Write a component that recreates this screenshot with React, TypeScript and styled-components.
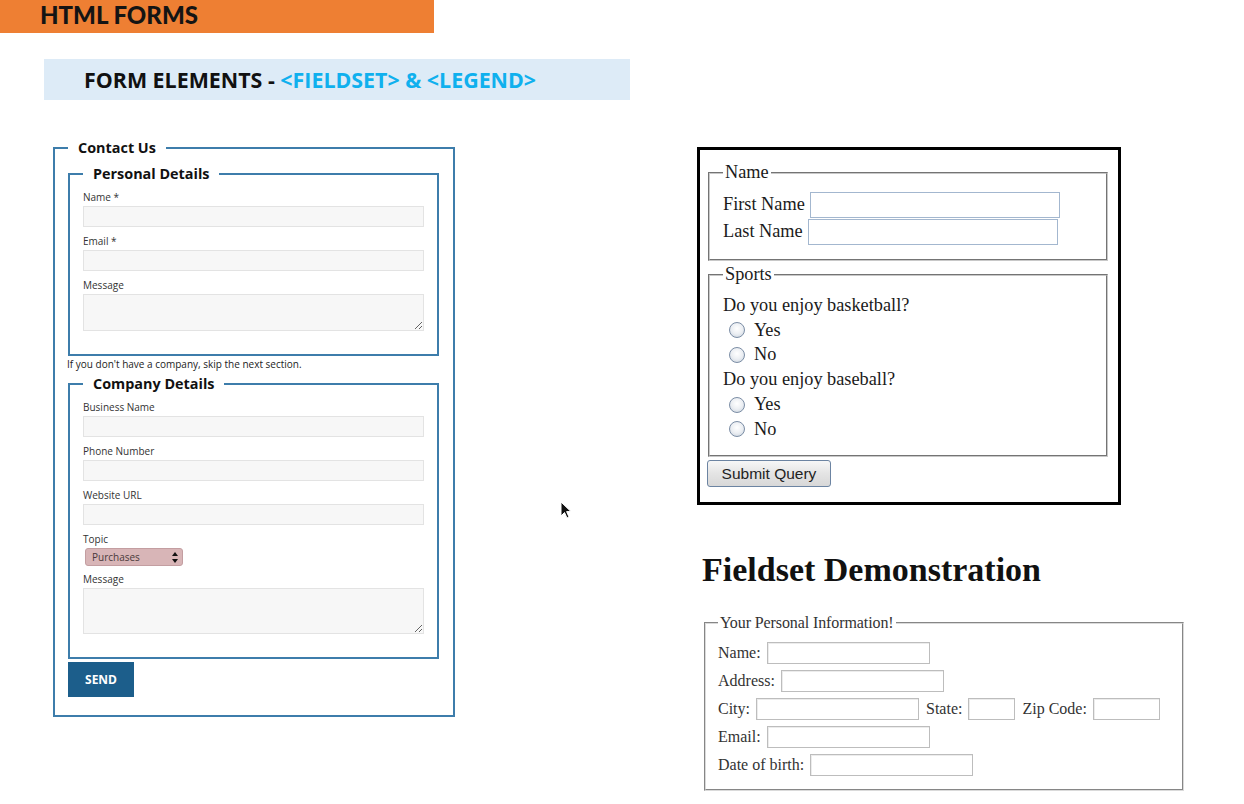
import React from "react";
import styled, { createGlobalStyle } from "styled-components";

const GlobalStyle = createGlobalStyle`
  html, body {
    margin: 0;
    padding: 0;
    width: 1244px;
    height: 804px;
    overflow: hidden;
    background: #ffffff;
  }
  body {
    font-family: "Open Sans", "Liberation Sans", sans-serif;
    color: #111;
  }
  * { box-sizing: border-box; }
`;

const Page = styled.div`
  position: relative;
  width: 1244px;
  height: 804px;
  display: flex;
  flex-direction: column;
`;

const TitleBar = styled.div`
  width: 434px;
  height: 33px;
  background: #ee7f33;
  padding: 0 0 0 40px;
  font: 900 24px/29px Lato, "Open Sans", sans-serif;
  color: #141414;
`;

const SubBar = styled.div`
  margin: 26px 0 0 44px;
  width: 586px;
  height: 41px;
  background: #ddebf7;
  padding-left: 40px;
  font: 700 21.4px/41px "Open Sans", sans-serif;
  color: #111;
`;

const Accent = styled.span`
  color: #0fb0ee;
`;

const Content = styled.div`
  display: flex;
  margin-top: 39px;
`;

const LeftColumn = styled.div`
  margin-left: 53px;
  width: 402px;
`;

const BlueFieldset = styled.fieldset<{ $outer?: boolean }>`
  margin: 0;
  min-width: 0;
  width: ${(p) => (p.$outer ? "402px" : "371px")};
  border: 2px solid #3d7dab;
  padding: ${(p) => (p.$outer ? "8px 13px 18px 13px" : "7px 13px 23px 13px")};
`;

const BlueLegend = styled.legend`
  padding: 0 10px;
  font: 700 14.4px/18px "Open Sans", sans-serif;
  color: #111;
`;

const Field = styled.div<{ $gap?: number }>`
  display: flex;
  flex-direction: column;
  gap: 2px;
  margin-bottom: ${(p) => (p.$gap ?? 7)}px;
  &:last-child { margin-bottom: 0; }
`;

const SmallLabel = styled.label`
  font: 400 10px/14px "Open Sans", sans-serif;
  color: #333;
`;

const FlatInput = styled.input`
  display: block;
  width: 100%;
  height: 21px;
  margin: 0;
  border: 1px solid #e3e3e3;
  background: #f7f7f7;
  outline: none;
`;

const FlatArea = styled.textarea<{ $h: number }>`
  display: block;
  width: 100%;
  height: ${(p) => p.$h}px;
  margin: 0;
  border: 1px solid #e3e3e3;
  background: #f7f7f7;
  resize: vertical;
  outline: none;
`;

const SelectBox = styled.div`
  margin-left: 2px;
  width: 98px;
  height: 18px;
  border: 1px solid #c39ea1;
  border-radius: 3px;
  background: #d8b5b7;
  display: flex;
  align-items: center;
  justify-content: space-between;
  padding: 0 4px 0 6px;
  font: 400 10px/16px "Open Sans", sans-serif;
  color: #4a3a3b;
`;

const Helper = styled.p`
  margin: 1px 0 4px -1px;
  font: 400 10px/14px "Open Sans", sans-serif;
  color: #222;
`;

const SendButton = styled.button`
  display: block;
  margin-top: 3px;
  width: 66px;
  height: 35px;
  border: none;
  background: #1c5e8b;
  color: #fff;
  font: 700 12px/35px "Open Sans", sans-serif;
  padding: 0;
`;

const RightColumn = styled.div`
  margin-left: 242px;
  margin-top: 8px;
  display: flex;
  flex-direction: column;
`;

const DemoBox = styled.div`
  width: 424px;
  height: 358px;
  border: 3px solid #000;
  padding: 12px 10px 0 7px;
  font-family: "Liberation Serif", "Times New Roman", serif;
  color: #1a1a1a;
`;

const GreyFieldset = styled.fieldset<{ $top?: number; $pad: string }>`
  margin: ${(p) => p.$top ?? 0}px 0 0 1px;
  min-width: 0;
  border: 2px groove #c8c8c8;
  padding: ${(p) => p.$pad};
`;

const SerifLegend = styled.legend`
  padding: 0 2px;
  font-size: 18.3px;
  line-height: 21px;
`;

const SerifRow = styled.div`
  display: flex;
  align-items: center;
  gap: 5px;
  height: 27px;
  font-size: 18.3px;
`;

const BlueBorderInput = styled.input`
  width: 250px;
  height: 26px;
  margin: 0;
  border: 1px solid #a3b7cf;
  background: #fff;
  outline: none;
`;

const SerifLine = styled.div<{ $indent?: boolean }>`
  display: flex;
  align-items: center;
  height: 24.8px;
  font-size: 18.3px;
  padding-left: ${(p) => (p.$indent ? "6px" : "0")};
`;

const Radio = styled.span`
  width: 16px;
  height: 16px;
  border-radius: 50%;
  border: 1px solid #7b8da5;
  background: radial-gradient(circle at 50% 40%, #ffffff 0%, #eceff3 50%, #c6d0db 100%);
  margin-right: 9px;
  flex: none;
`;

const QueryButton = styled.button`
  margin: 3px 0 0 0;
  width: 124px;
  height: 27px;
  padding: 0;
  border: 1px solid #6c84a2;
  border-radius: 3px;
  background: linear-gradient(#f7f7f7, #e4e4e4 50%, #d8d8d8);
  font: 400 15.5px/25px "Liberation Sans", Arial, sans-serif;
  color: #222;
`;

const DemoHeading = styled.h1`
  margin: 46px 0 0 5px;
  font: 700 34px/38px "Liberation Serif", "Times New Roman", serif;
  color: #111;
`;

const InfoFieldset = styled.fieldset`
  margin: 25px 0 0 7px;
  width: 480px;
  min-width: 0;
  border: 2px groove #dadada;
  padding: 7px 12px 10px 12px;
  font-family: "Liberation Serif", "Times New Roman", serif;
  color: #333;
`;

const InfoLegend = styled.legend`
  padding: 0 2px;
  font-size: 16px;
  line-height: 18px;
  letter-spacing: -0.1px;
`;

const InfoRow = styled.div`
  display: flex;
  align-items: center;
  gap: 6px;
  height: 28px;
  font-size: 16px;
`;

const GapLabel = styled.span`
  margin-left: 1px;
`;

const GreyInput = styled.input<{ $w: number }>`
  width: ${(p) => p.$w}px;
  height: 22px;
  margin: 0;
  border: 1px solid #bdbdbd;
  box-shadow: inset 1px 1px 0 #ececec;
  background: #fff;
  outline: none;
`;

const Cursor = styled.svg`
  position: absolute;
  left: 560px;
  top: 501px;
`;

const SelectArrows = () => (
  <svg width="6" height="11" viewBox="0 0 6 11">
    <path d="M3 0 L6 4 L0 4 Z" fill="#111" />
    <path d="M0 7 L6 7 L3 11 Z" fill="#111" />
  </svg>
);

export default function App() {
  return (
    <Page>
      <GlobalStyle />
      <TitleBar>HTML FORMS</TitleBar>
      <SubBar>
        FORM ELEMENTS - <Accent>&lt;FIELDSET&gt; &amp; &lt;LEGEND&gt;</Accent>
      </SubBar>
      <Content>
        <LeftColumn>
          <BlueFieldset $outer>
            <BlueLegend>Contact Us</BlueLegend>
            <BlueFieldset>
              <BlueLegend>Personal Details</BlueLegend>
              <Field>
                <SmallLabel>Name *</SmallLabel>
                <FlatInput />
              </Field>
              <Field>
                <SmallLabel>Email *</SmallLabel>
                <FlatInput />
              </Field>
              <Field>
                <SmallLabel>Message</SmallLabel>
                <FlatArea $h={37} />
              </Field>
            </BlueFieldset>
            <Helper>If you don't have a company, skip the next section.</Helper>
            <BlueFieldset>
              <BlueLegend>Company Details</BlueLegend>
              <Field>
                <SmallLabel>Business Name</SmallLabel>
                <FlatInput />
              </Field>
              <Field>
                <SmallLabel>Phone Number</SmallLabel>
                <FlatInput />
              </Field>
              <Field>
                <SmallLabel>Website URL</SmallLabel>
                <FlatInput />
              </Field>
              <Field $gap={6}>
                <SmallLabel>Topic</SmallLabel>
                <SelectBox>
                  <span>Purchases</span>
                  <SelectArrows />
                </SelectBox>
              </Field>
              <Field>
                <SmallLabel>Message</SmallLabel>
                <FlatArea $h={46} />
              </Field>
            </BlueFieldset>
            <SendButton>SEND</SendButton>
          </BlueFieldset>
        </LeftColumn>

        <RightColumn>
          <DemoBox>
            <GreyFieldset $pad="8px 13px 14px 13px">
              <SerifLegend>Name</SerifLegend>
              <SerifRow>
                First Name <BlueBorderInput />
              </SerifRow>
              <SerifRow>
                Last Name <BlueBorderInput />
              </SerifRow>
            </GreyFieldset>
            <GreyFieldset $top={3} $pad="8px 13px 13px 13px">
              <SerifLegend>Sports</SerifLegend>
              <SerifLine>Do you enjoy basketball?</SerifLine>
              <SerifLine $indent>
                <Radio />
                Yes
              </SerifLine>
              <SerifLine $indent>
                <Radio />
                No
              </SerifLine>
              <SerifLine>Do you enjoy baseball?</SerifLine>
              <SerifLine $indent>
                <Radio />
                Yes
              </SerifLine>
              <SerifLine $indent>
                <Radio />
                No
              </SerifLine>
            </GreyFieldset>
            <QueryButton>Submit Query</QueryButton>
          </DemoBox>

          <DemoHeading>Fieldset Demonstration</DemoHeading>

          <InfoFieldset>
            <InfoLegend>Your Personal Information!</InfoLegend>
            <InfoRow>
              Name: <GreyInput $w={163} />
            </InfoRow>
            <InfoRow>
              Address: <GreyInput $w={163} />
            </InfoRow>
            <InfoRow>
              City: <GreyInput $w={163} />
              <GapLabel>State:</GapLabel> <GreyInput $w={47} />
              <GapLabel>Zip Code:</GapLabel> <GreyInput $w={67} />
            </InfoRow>
            <InfoRow>
              Email: <GreyInput $w={163} />
            </InfoRow>
            <InfoRow>
              Date of birth: <GreyInput $w={163} />
            </InfoRow>
          </InfoFieldset>
        </RightColumn>
      </Content>

      <Cursor width="12" height="19" viewBox="0 0 12 19">
        <path
          d="M1 1 L1 15 L4.5 11.5 L7 17 L9 16 L6.6 10.6 L11 10.6 Z"
          fill="#111"
          stroke="#fff"
          strokeWidth="1"
          strokeLinejoin="round"
        />
      </Cursor>
    </Page>
  );
}
